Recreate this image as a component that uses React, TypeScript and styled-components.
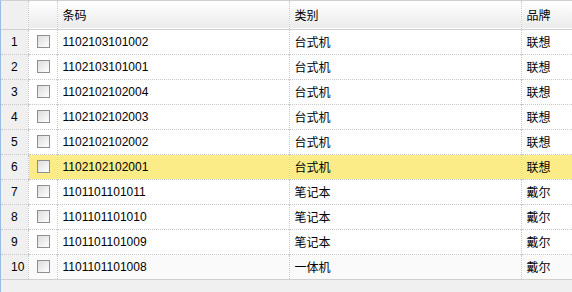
import React from 'react';
import styled, { createGlobalStyle } from 'styled-components';

const GlobalStyle = createGlobalStyle`
  html, body {
    margin: 0;
    padding: 0;
    background: #ffffff;
  }
  body {
    font-family: "Liberation Sans", Arial, "Noto Sans CJK SC", sans-serif;
    font-size: 12px;
    color: #000;
  }
`;

const GridPanel = styled.div`
  width: 572px;
  height: 292px;
  box-sizing: border-box;
  border-left: 1px solid #99bbe8;
  border-top: 1px solid #d0d0d0;
  background: #f0f0f0;
  overflow: hidden;
`;

const Table = styled.table`
  border-collapse: collapse;
  table-layout: fixed;
  width: 571px;
  background: #fff;
  border-bottom: 1px solid #d0d0d0;
`;

const HeadRow = styled.tr`
  height: 28px;
  background: linear-gradient(#ffffff, #ebebeb);
  border-bottom: 1px solid #d0d0d0;
`;

const HeadCell = styled.th<{ $first?: boolean }>`
  font-weight: normal;
  text-align: left;
  padding: 0 5px;
  border-left: ${({ $first }) => ($first ? 'none' : '1px dotted #c8c8c8')};
  background: ${({ $first }) => ($first ? '#f0f0f0' : 'transparent')};
  white-space: nowrap;
  overflow: hidden;
`;

const Row = styled.tr<{ $selected?: boolean; $over?: boolean }>`
  height: 25px;
  background: ${({ $selected, $over }) =>
    $selected ? '#fbec88' : $over ? '#fafafa' : '#ffffff'};
  border-bottom: 1px dotted #c8c8c8;
`;

const NumCell = styled.td`
  background: #f0f0f0;
  padding: 0 0 0 10px;
  border-bottom: 1px dotted #c8c8c8;
`;

const Cell = styled.td`
  padding: 0 5px;
  border-left: 1px dotted #c8c8c8;
  white-space: nowrap;
  overflow: hidden;
`;

const CheckCell = styled(Cell)`
  padding: 0 0 0 8px;
`;

const CheckBox = styled.span`
  display: block;
  width: 11px;
  height: 11px;
  border: 1px solid #8f8f8f;
  background: linear-gradient(135deg, #dcdcdc, #ffffff);
`;

const rows = [
  { code: '1102103101002', type: '台式机', brand: '联想' },
  { code: '1102103101001', type: '台式机', brand: '联想' },
  { code: '1102102102004', type: '台式机', brand: '联想' },
  { code: '1102102102003', type: '台式机', brand: '联想' },
  { code: '1102102102002', type: '台式机', brand: '联想' },
  { code: '1102102102001', type: '台式机', brand: '联想' },
  { code: '1101101101011', type: '笔记本', brand: '戴尔' },
  { code: '1101101101010', type: '笔记本', brand: '戴尔' },
  { code: '1101101101009', type: '笔记本', brand: '戴尔' },
  { code: '1101101101008', type: '一体机', brand: '戴尔' },
];

export default function App() {
  return (
    <>
      <GlobalStyle />
      <GridPanel>
        <Table>
          <colgroup>
            <col style={{ width: 27 }} />
            <col style={{ width: 29 }} />
            <col style={{ width: 232 }} />
            <col style={{ width: 232 }} />
            <col style={{ width: 51 }} />
          </colgroup>
          <thead>
            <HeadRow>
              <HeadCell $first />
              <HeadCell />
              <HeadCell>条码</HeadCell>
              <HeadCell>类别</HeadCell>
              <HeadCell>品牌</HeadCell>
            </HeadRow>
          </thead>
          <tbody>
            {rows.map((r, i) => (
              <Row key={r.code} $selected={i === 5} $over={i === 9}>
                <NumCell>{i + 1}</NumCell>
                <CheckCell>
                  <CheckBox />
                </CheckCell>
                <Cell>{r.code}</Cell>
                <Cell>{r.type}</Cell>
                <Cell>{r.brand}</Cell>
              </Row>
            ))}
          </tbody>
        </Table>
      </GridPanel>
    </>
  );
}
